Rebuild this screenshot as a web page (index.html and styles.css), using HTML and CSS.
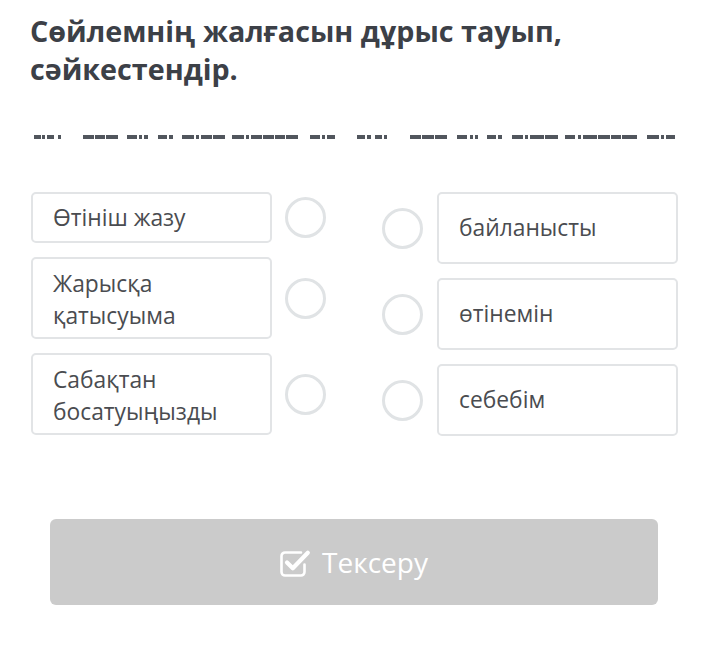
FILE: index.html
```html
<!DOCTYPE html>
<html lang="kk">
<head>
<meta charset="utf-8">
<link rel="stylesheet" href="styles.css">
</head>
<body>
<div class="page">
  <h1 class="title">Сөйлемнің жалғасын дұрыс тауып, сәйкестендір.</h1>
  <svg class="divider" width="654" height="4" viewBox="0 0 654 4">
    <g fill="#51565d">
      <rect x="4" y="0" width="7" height="4"/><rect x="12" y="0" width="3" height="4"/>
      <rect x="17" y="0" width="7" height="4"/><rect x="28" y="0" width="3" height="4"/>
      <rect x="53" y="0" width="11" height="4"/><rect x="65" y="0" width="10" height="4"/><rect x="76" y="0" width="12" height="4"/>
      <rect x="97" y="0" width="10" height="4"/><rect x="109" y="0" width="3" height="4"/><rect x="114" y="0" width="4" height="4"/>
      <rect x="128" y="0" width="9" height="4"/><rect x="139" y="0" width="4" height="4"/>
      <rect x="152" y="0" width="12" height="4"/><rect x="166" y="0" width="3" height="4"/><rect x="171" y="0" width="11" height="4"/><rect x="183" y="0" width="12" height="4"/>
      <rect x="202" y="0" width="12" height="4"/><rect x="216" y="0" width="3" height="4"/><rect x="221" y="0" width="11" height="4"/><rect x="233" y="0" width="11" height="4"/><rect x="245" y="0" width="10" height="4"/><rect x="256" y="0" width="12" height="4"/>
      <rect x="280" y="0" width="10" height="4"/><rect x="292" y="0" width="3" height="4"/><rect x="297" y="0" width="8" height="4"/>
      <rect x="327" y="0" width="8" height="4"/><rect x="337" y="0" width="4" height="4"/>
      <rect x="345" y="0" width="7" height="4"/><rect x="354" y="0" width="3" height="4"/>
      <rect x="380" y="0" width="11" height="4"/><rect x="392" y="0" width="12" height="4"/><rect x="405" y="0" width="12" height="4"/>
      <rect x="427" y="0" width="10" height="4"/><rect x="440" y="0" width="3" height="4"/><rect x="445" y="0" width="3" height="4"/>
      <rect x="457" y="0" width="9" height="4"/><rect x="468" y="0" width="4" height="4"/>
      <rect x="482" y="0" width="11" height="4"/><rect x="495" y="0" width="3" height="4"/><rect x="500" y="0" width="14" height="4"/><rect x="515" y="0" width="13" height="4"/>
      <rect x="535" y="0" width="10" height="4"/><rect x="548" y="0" width="3" height="4"/><rect x="553" y="0" width="14" height="4"/><rect x="568" y="0" width="12" height="4"/><rect x="581" y="0" width="10" height="4"/><rect x="592" y="0" width="15" height="4"/>
      <rect x="617" y="0" width="12" height="4"/><rect x="631" y="0" width="3" height="4"/><rect x="636" y="0" width="9" height="4"/>
    </g>
  </svg>

  <div class="match">
    <div class="col col-left">
      <div class="row">
        <div class="card card-a">Өтініш жазу</div>
        <span class="dot"></span>
      </div>
      <div class="row">
        <div class="card card-b">Жарысқа<br>қатысуыма</div>
        <span class="dot"></span>
      </div>
      <div class="row">
        <div class="card card-b">Сабақтан<br>босатуыңызды</div>
        <span class="dot"></span>
      </div>
    </div>
    <div class="col col-right">
      <div class="row">
        <span class="dot"></span>
        <div class="card card-r">байланысты</div>
      </div>
      <div class="row">
        <span class="dot"></span>
        <div class="card card-r">өтінемін</div>
      </div>
      <div class="row">
        <span class="dot"></span>
        <div class="card card-r">себебім</div>
      </div>
    </div>
  </div>

  <button class="check-btn" type="button">
    <svg class="check-icon" width="32" height="28" viewBox="0 0 32 28">
      <path d="M21 3.5 H5 a3.5 3.5 0 0 0 -3.5 3.5 v16 a3.5 3.5 0 0 0 3.5 3.5 h16 a3.5 3.5 0 0 0 3.5 -3.5 v-7.5" fill="none" stroke="#ffffff" stroke-width="2.6" stroke-linecap="round"/>
      <path d="M7 13.5 l5.8 5.8 l15 -15.5" fill="none" stroke="#ffffff" stroke-width="4.2" stroke-linecap="round" stroke-linejoin="round"/>
    </svg>
    <span>Тексеру</span>
  </button>
</div>
</body>
</html>
```

FILE: styles.css
```css
* { box-sizing: border-box; }

html, body {
  margin: 0;
  padding: 0;
  background: #ffffff;
}

body {
  font-family: "Open Sans", "Noto Sans", "DejaVu Sans", sans-serif;
}

.page {
  padding: 12px 30px 0 30px;
}

.title {
  margin: 0;
  font-size: 28.7px;
  line-height: 38px;
  font-weight: 700;
  color: #3c4047;
}

.divider {
  display: block;
  margin-top: 47px;
}

.match {
  display: flex;
  justify-content: space-between;
  margin-top: 53px;
  margin-left: 1px;
  width: 647px;
}

.col {
  display: flex;
  flex-direction: column;
  gap: 14px;
}

.row {
  display: flex;
  align-items: center;
}

.col-left .row { gap: 13px; }
.col-right .row { gap: 14px; }

.card {
  width: 241px;
  border: 2px solid #e2e4e6;
  border-radius: 5px;
  padding: 0 20px;
  font-size: 22.8px;
  line-height: 32px;
  color: #4a4c50;
  display: flex;
  align-items: center;
}

.card-a {
  height: 51px;
}

.card-b {
  display: block;
  height: 82px;
  padding-top: 9px;
  padding-bottom: 5px;
}

.card-r {
  height: 72px;
}

.dot {
  flex: none;
  width: 41px;
  height: 41px;
  border: 3px solid #e0e3e5;
  border-radius: 50%;
}

.check-btn {
  display: flex;
  align-items: center;
  justify-content: center;
  gap: 10px;
  margin: 83px 0 0 20px;
  width: 608px;
  height: 86px;
  border: none;
  border-radius: 6px;
  background: #cbcbcb;
  color: #ffffff;
  font-family: "Open Sans", "Noto Sans", sans-serif;
  font-size: 28px;
  font-weight: 400;
  padding: 0;
}

.check-icon {
  display: block;
  margin-top: 2px;
}
```
